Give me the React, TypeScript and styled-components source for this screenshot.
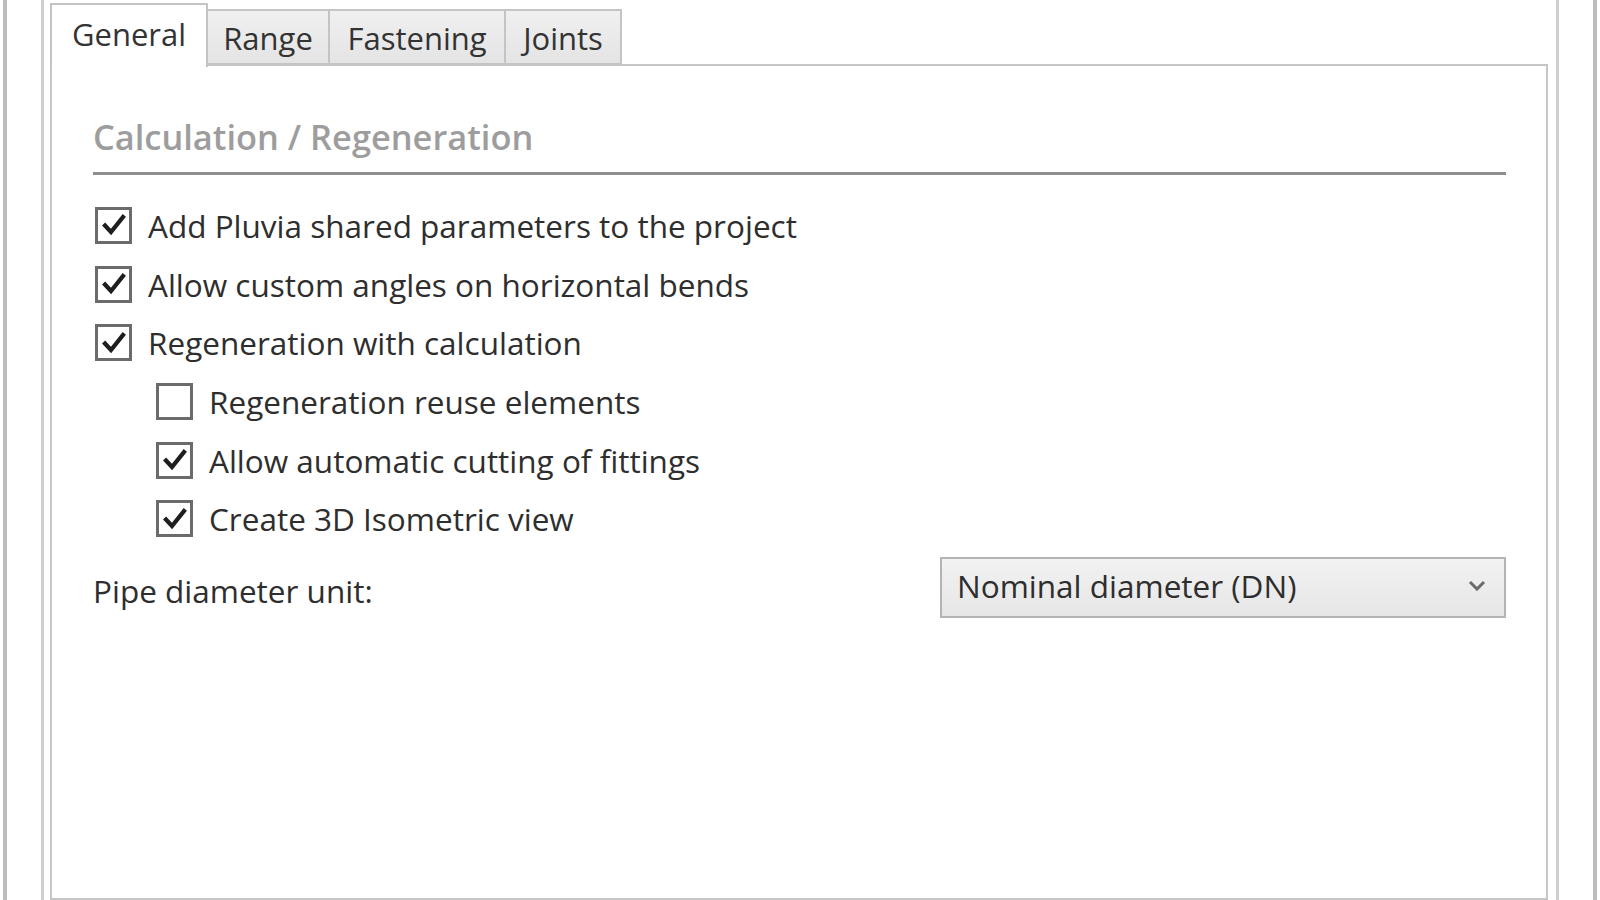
import React from "react";
import styled, { createGlobalStyle } from "styled-components";

type Option = {
  label: string;
  checked: boolean;
  nested?: boolean;
};

const options: Option[] = [
  { label: "Add Pluvia shared parameters to the project", checked: true },
  { label: "Allow custom angles on horizontal bends", checked: true },
  { label: "Regeneration with calculation", checked: true },
  { label: "Regeneration reuse elements", checked: false, nested: true },
  { label: "Allow automatic cutting of fittings", checked: true, nested: true },
  { label: "Create 3D Isometric view", checked: true, nested: true },
];

const tabs = [
  { title: "General", width: 158 },
  { title: "Range", width: 122 },
  { title: "Fastening", width: 176 },
  { title: "Joints", width: 116 },
];

const CheckMark = () => (
  <svg width="26" height="24" viewBox="0 0 26 24">
    <path
      d="M4 12.5 L10 19 L22 4"
      fill="none"
      stroke="#1e1e1e"
      strokeWidth="4.2"
      strokeLinecap="square"
      strokeLinejoin="miter"
    />
  </svg>
);

const Chevron = () => (
  <svg width="18" height="11" viewBox="0 0 18 11">
    <path d="M2 2 L9 9 L16 2" fill="none" stroke="#6a6a6a" strokeWidth="3" />
  </svg>
);

const App: React.FC = () => {
  return (
    <>
      <GlobalStyle />
      <Window>
        <Group>
          <TabControl>
            <TabStrip>
              {tabs.map((t, i) => (
                <Tab key={t.title} active={i === 0} w={t.width}>
                  {t.title}
                </Tab>
              ))}
            </TabStrip>
            <Panel>
              <Heading>Calculation / Regeneration</Heading>
              <OptionList>
                {options.map((o) => (
                  <OptionRow key={o.label} nested={o.nested}>
                    <Box>{o.checked && <CheckMark />}</Box>
                    <OptionLabel>{o.label}</OptionLabel>
                  </OptionRow>
                ))}
              </OptionList>
              <FieldRow>
                <FieldLabel>Pipe diameter unit:</FieldLabel>
                <Combo>
                  <span>Nominal diameter (DN)</span>
                  <Chevron />
                </Combo>
              </FieldRow>
            </Panel>
          </TabControl>
        </Group>
      </Window>
    </>
  );
};

// Styled Components
const GlobalStyle = createGlobalStyle`
  html, body {
    margin: 0;
    padding: 0;
    background: #ffffff;
    overflow: hidden;
  }
  body {
    font-family: "Open Sans", "Noto Sans", Arial, sans-serif;
    color: #2e2e2e;
  }
`;

const Window = styled.div`
  box-sizing: border-box;
  width: 1594px;
  height: 900px;
  margin-left: 3px;
  border-left: 4px solid #bdbdbd;
  border-right: 4px solid #bdbdbd;
  padding: 0 34px;
  overflow: hidden;
`;

const Group = styled.div`
  box-sizing: border-box;
  height: 100%;
  border-left: 3px solid #cfcfcf;
  border-right: 3px solid #cfcfcf;
  padding: 0 8px 0 6px;
`;

const TabControl = styled.div`
  display: flex;
  flex-direction: column;
  height: 100%;
`;

const TabStrip = styled.div`
  display: flex;
  align-items: flex-end;
  height: 66px;
  position: relative;
  z-index: 1;
`;

const Tab = styled.div<{ active?: boolean; w: number }>`
  box-sizing: border-box;
  width: ${({ w }) => w}px;
  height: ${({ active }) => (active ? "64px" : "56px")};
  margin-bottom: ${({ active }) => (active ? "-1px" : "1px")};
  padding: ${({ active }) => (active ? "0 0 4px 0" : "2px 0 0 0")};
  display: flex;
  align-items: center;
  justify-content: center;
  font-size: 31px;
  color: #333;
  border: 2px solid #c4c4c4;
  border-left: ${({ active }) => (active ? "2px solid #c4c4c4" : "none")};
  border-bottom: ${({ active }) => (active ? "none" : "2px solid #c4c4c4")};
  background: ${({ active }) =>
    active ? "#ffffff" : "linear-gradient(#f0f0f0, #e4e4e4)"};
`;

const Panel = styled.div`
  flex: 1;
  margin-top: -2px;
  border: 2px solid #c6c6c6;
  background: #ffffff;
  padding: 47px 40px 0 41px;
`;

const Heading = styled.div`
  font-size: 34.4px;
  font-weight: 600;
  color: #9d9d9d;
  line-height: 48px;
  padding-bottom: 11px;
  border-bottom: 3px solid #8e8e8e;
`;

const OptionList = styled.div`
  display: flex;
  flex-direction: column;
  margin-top: 21px;
`;

const OptionRow = styled.div<{ nested?: boolean }>`
  display: flex;
  align-items: center;
  height: 58.7px;
  padding-left: ${({ nested }) => (nested ? "63px" : "2px")};
`;

const Box = styled.div`
  box-sizing: border-box;
  width: 37px;
  height: 37px;
  border: 3px solid #6b6b6b;
  background: #ffffff;
  display: flex;
  align-items: center;
  justify-content: center;
  margin-right: 16px;
`;

const OptionLabel = styled.span`
  font-size: 31.5px;
  color: #2e2e2e;
`;

const FieldRow = styled.div`
  display: flex;
  align-items: center;
  justify-content: space-between;
  margin-top: 9px;
`;

const FieldLabel = styled.span`
  font-size: 31.5px;
  color: #2e2e2e;
  padding-top: 6px;
`;

const Combo = styled.div`
  box-sizing: border-box;
  width: 566px;
  height: 61px;
  border: 2px solid #b4b4b4;
  background: linear-gradient(#f2f2f2, #e6e6e6);
  display: flex;
  align-items: center;
  justify-content: space-between;
  padding: 0 18px 4px 15px;
  font-size: 31.5px;
  color: #2e2e2e;
`;

export default App;
